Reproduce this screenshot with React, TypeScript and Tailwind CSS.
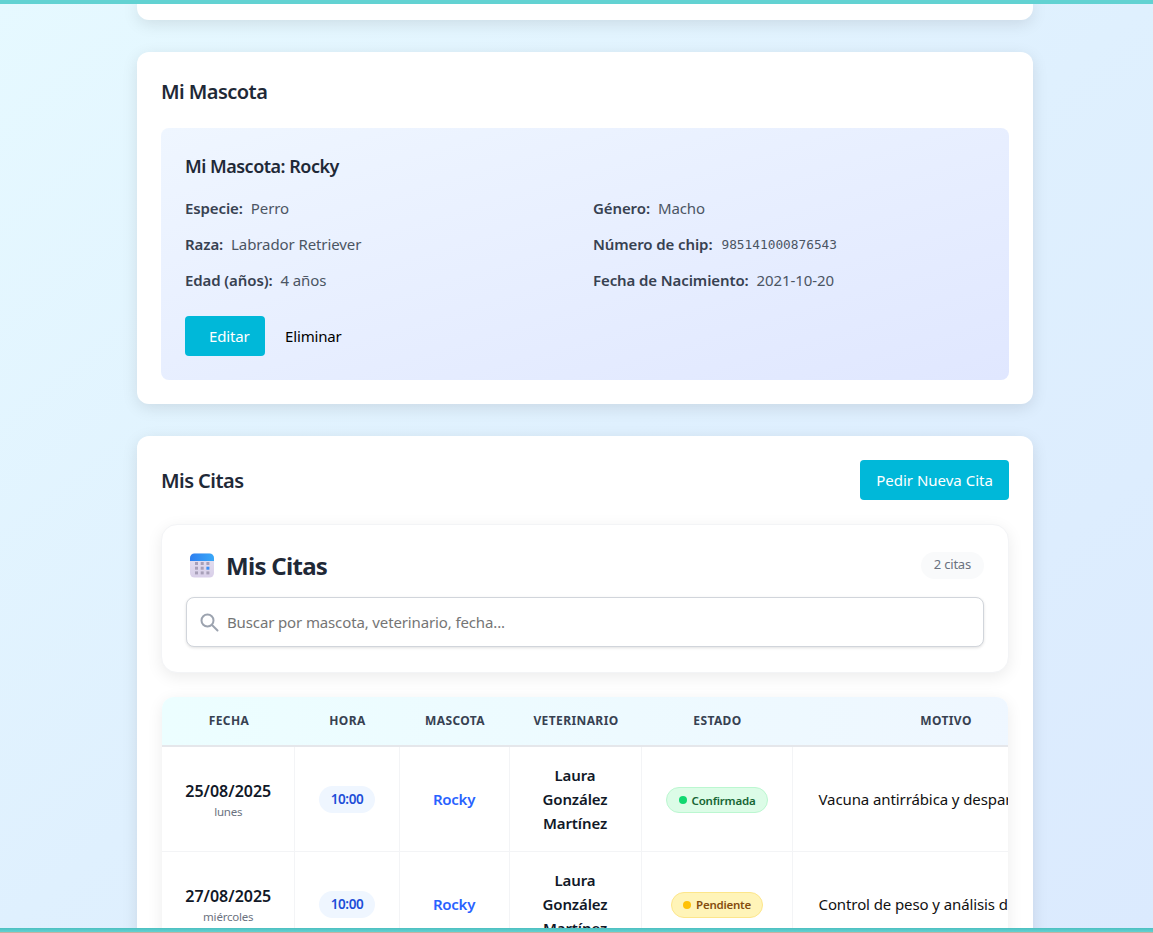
const font = "font-['Noto_Sans',sans-serif]";

const rows = [
  {
    date: "25/08/2025",
    day: "lunes",
    status: "Confirmada",
    motive: "Vacuna antirrábica y desparasitación",
  },
  {
    date: "27/08/2025",
    day: "miércoles",
    status: "Pendiente",
    motive: "Control de peso y análisis de sangre",
  },
];

const Field = ({ label, value, mono }: { label: string; value: string; mono?: boolean }) => (
  <p className="flex h-6 items-center gap-2 text-[15px] leading-6 tracking-[-0.1px]">
    <span className="font-semibold text-[#374151]">{label}</span>
    {mono ? (
      <span className="pt-[2px] pl-px font-['DejaVu_Sans_Mono',monospace] text-[12.8px] leading-5 tracking-normal text-[#4b5563]">{value}</span>
    ) : (
      <span className="text-[#4b5563]">{value}</span>
    )}
  </p>
);

const CalendarIcon = () => (
  <svg width="24" height="25" viewBox="0 0 24 25" className="shrink-0">
    <defs>
      <linearGradient id="calBody" x1="0" y1="0" x2="0" y2="1">
        <stop offset="0" stopColor="#e6e2f0" />
        <stop offset="1" stopColor="#d9cfe9" />
      </linearGradient>
      <linearGradient id="calHead" x1="0" y1="0" x2="1" y2="0">
        <stop offset="0" stopColor="#2e7ff0" />
        <stop offset="1" stopColor="#38a8f8" />
      </linearGradient>
    </defs>
    <rect x="0" y="0.5" width="24" height="24" rx="4.5" fill="url(#calBody)" />
    <path d="M0 8V5a4.5 4.5 0 0 1 4.5-4.5h15A4.5 4.5 0 0 1 24 5v3z" fill="url(#calHead)" />
    {[0, 1, 2].map((r) =>
      [0, 1, 2].map((c) => (
        <rect
          key={`${r}-${c}`}
          x={5 + c * 5.7}
          y={9 + r * 4.7}
          width="3"
          height="3"
          fill={r === 1 && c === 2 ? "#3b8ff5" : "#a79fb8"}
        />
      )),
    )}
  </svg>
);

export default function App() {
  return (
    <div className={`relative h-[933px] overflow-hidden bg-gradient-to-br from-[#e6f9ff] via-[#dff0fe] to-[#dbeafe] ${font}`}>
      <div className="absolute inset-x-0 top-0 z-10 h-1 bg-[#62d2d2]" />
      <div className="absolute inset-x-0 bottom-0 z-10 h-[5px] border-b border-[#c8b0a0] bg-gradient-to-b from-[#4dbfc0] to-[#62d2d2]" />

      <main className="ml-[137px] flex w-[896px] flex-col gap-8">
        <div className="h-5 rounded-b-xl bg-white shadow-[0_4px_16px_rgba(0,0,0,0.1)]" />

        <section className="rounded-xl bg-white p-6 shadow-[0_4px_16px_rgba(0,0,0,0.1)]">
          <h2 className="mb-6 flex h-[28px] items-center pt-[3px] text-[20px] font-semibold tracking-[-0.55px] text-[#1f2937]">Mi Mascota</h2>
          <div className="rounded-lg bg-gradient-to-br from-[#eff6ff] to-[#e0e7ff] p-6">
            <h3 className="mb-4 text-[18px] leading-[28px] font-semibold tracking-[-0.5px] text-[#1f2937]">Mi Mascota: Rocky</h3>
            <div className="grid grid-cols-2 gap-x-4 gap-y-3">
              <Field label="Especie:" value="Perro" />
              <Field label="Género:" value="Macho" />
              <Field label="Raza:" value="Labrador Retriever" />
              <Field label="Número de chip:" value="985141000876543" mono />
              <Field label="Edad (años):" value="4 años" />
              <Field label="Fecha de Nacimiento:" value="2021-10-20" />
            </div>
            <div className="mt-6 flex items-center gap-1">
              <button className="h-10 w-20 rounded bg-[#00b8d9] pl-6 text-left text-[15px] tracking-[-0.15px] text-white">Editar</button>
              <button className="h-10 px-4 text-[15px] tracking-[-0.15px] text-black">Eliminar</button>
            </div>
          </div>
        </section>

        <section className="rounded-xl bg-white p-6 shadow-[0_4px_16px_rgba(0,0,0,0.1)]">
          <div className="mb-6 flex items-center justify-between">
            <h2 className="pt-[2px] text-[20px] font-semibold tracking-[-0.55px] text-[#1f2937]">Mis Citas</h2>
            <button className="h-10 w-[149px] rounded bg-[#00b8d9] text-[15px] text-white">Pedir Nueva Cita</button>
          </div>

          <div className="mb-6 rounded-2xl border border-[#f3f4f6] bg-white px-6 pt-6 pb-[25px] shadow-[0_4px_16px_rgba(0,0,0,0.08)]">
            <div className="mb-4 flex items-center justify-between">
              <div className="flex items-center gap-3 pl-1">
                <CalendarIcon />
                <h3 className="pt-[2px] text-[24px] leading-[30px] font-bold tracking-[-0.7px] text-[#1f2937]">Mis Citas</h3>
              </div>
              <span className="flex h-[27px] items-center rounded-full bg-[#f9fafb] px-[13px] text-[13px] tracking-[-0.2px] text-[#6b7280]">2 citas</span>
            </div>
            <div className="flex h-[50px] items-center gap-2 rounded-lg border border-[#d1d5db] bg-white pl-3 shadow-[0_1px_3px_rgba(0,0,0,0.12)]">
              <svg width="20" height="20" viewBox="0 0 20 20" fill="none" stroke="#9ca3af" strokeWidth="2" strokeLinecap="round">
                <circle cx="8.5" cy="8.5" r="6" />
                <path d="M13 13l5.5 5.5" />
              </svg>
              <span className="text-[15px] tracking-[-0.13px] text-[#757575]">Buscar por mascota, veterinario, fecha...</span>
            </div>
          </div>

          <div className="mx-px overflow-hidden rounded-xl shadow-[0_4px_16px_rgba(0,0,0,0.08)]">
            <table className="w-[936px] table-fixed border-collapse text-center">
              <thead>
                <tr className="h-[49px] border-b-2 border-[#e5e7eb] bg-gradient-to-r from-[#ecfeff] to-[#eff6ff] text-[12px] font-bold tracking-[0.4px] text-[#374151]">
                  <th className="w-[132px] pl-[2px]">FECHA</th>
                  <th className="w-[105px] pl-[2px]">HORA</th>
                  <th className="w-[110px] pl-[2px]">MASCOTA</th>
                  <th className="w-[132px] pl-[2px]">VETERINARIO</th>
                  <th className="w-[151px] pl-[2px]">ESTADO</th>
                  <th className="pl-[2px]">MOTIVO</th>
                </tr>
              </thead>
              <tbody>
                {rows.map((r) => {
                  const confirmed = r.status === "Confirmada";
                  return (
                    <tr key={r.date} className="h-[105px] border-b border-[#f3f4f6] bg-white">
                      <td className="border-r border-[#f3f4f6] pt-[4px] pl-px">
                        <div className="text-[16px] leading-5 font-semibold text-[#111827]">{r.date}</div>
                        <div className="mt-[3px] text-[11.5px] leading-4 tracking-[-0.2px] text-[#6b7280]">{r.day}</div>
                      </td>
                      <td className="border-r border-[#f3f4f6] pt-[2px] pl-px">
                        <span className="inline-block rounded-2xl bg-[#eff6ff] px-3 py-1 text-[13.5px] leading-[19px] font-semibold tracking-[-0.4px] text-[#1d4ed8]">10:00</span>
                      </td>
                      <td className="border-r border-[#f3f4f6] pt-px text-[15px] font-semibold tracking-[-0.25px] text-[#2962ff]">Rocky</td>
                      <td className="border-r border-[#f3f4f6] px-6 pt-px text-[15px] leading-6 font-semibold tracking-[-0.1px] text-[#111827]">Laura González Martínez</td>
                      <td className="border-r border-[#f3f4f6] pt-[2px] pl-px">
                        {confirmed ? (
                          <span className="inline-flex h-[26px] items-center gap-[5px] rounded-full border border-[#bbf7d0] bg-[#dcfce7] px-3 text-[11.5px] font-semibold tracking-[-0.2px] text-[#166534]">
                            <span className="size-2 rounded-full bg-[#10d870]" />
                            {r.status}
                          </span>
                        ) : (
                          <span className="inline-flex h-[26px] items-center gap-[5px] rounded-full border border-[#fde68a] bg-[#fff4b8] px-[11px] text-[11.5px] font-semibold tracking-[-0.25px] text-[#854d0e]">
                            <span className="size-2 rounded-full bg-[#ffc107]" />
                            {r.status}
                          </span>
                        )}
                      </td>
                      <td className="pt-px pl-[26px] text-left text-[15px] whitespace-nowrap tracking-[-0.1px] text-[#111]">{r.motive}</td>
                    </tr>
                  );
                })}
              </tbody>
            </table>
          </div>
        </section>
      </main>
    </div>
  );
}
